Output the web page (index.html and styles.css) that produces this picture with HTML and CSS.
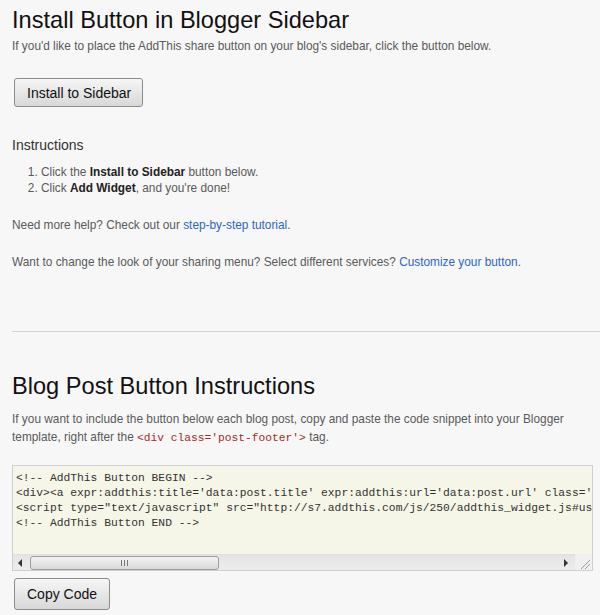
FILE: index.html
```html
<!DOCTYPE html>
<html>
<head>
<meta charset="utf-8">
<link rel="stylesheet" href="styles.css">
</head>
<body>
<div class="page">
  <h1 class="title">Install Button in Blogger Sidebar</h1>
  <p class="lead">If you'd like to place the AddThis share button on your blog's sidebar, click the button below.</p>
  <button class="btn btn-install">Install to Sidebar</button>

  <h3 class="subhead">Instructions</h3>
  <ol class="steps">
    <li>Click the <b>Install to Sidebar</b> button below.</li>
    <li>Click <b>Add Widget</b>, and you're done!</li>
  </ol>
  <p class="help">Need more help? Check out our <a href="#">step-by-step tutorial</a>.</p>
  <p class="help2">Want to change the look of your sharing menu? Select different services? <a href="#">Customize your button</a>.</p>

  <hr class="divider">

  <h2 class="title title2">Blog Post Button Instructions</h2>
  <p class="lead2">If you want to include the button below each blog post, copy and paste the code snippet into your Blogger template, right after the <code class="tag">&lt;div class='post-footer'&gt;</code> tag.</p>

  <div class="codebox">
    <pre class="code">&lt;!-- AddThis Button BEGIN --&gt;
&lt;div&gt;&lt;a expr:addthis:title='data:post.title' expr:addthis:url='data:post.url' class='addthis_button'&gt;&lt;img src="http://s7.addthis.com/static/btn/v2/lg-share-en.gif" width="125" height="16" alt="Bookmark and Share" style="border:0"/&gt;&lt;/a&gt;&lt;/div&gt;
&lt;script type="text/javascript" src="http://s7.addthis.com/js/250/addthis_widget.js#username=xa-4d2b47597ad291fb"&gt;&lt;/script&gt;
&lt;!-- AddThis Button END --&gt;</pre>
    <div class="hscroll">
      <div class="track">
        <span class="arrow arrow-left"></span>
        <div class="thumb"><span class="grip"></span></div>
        <span class="arrow arrow-right"></span>
      </div>
      <div class="corner">
        <svg width="17" height="16" viewBox="0 0 17 16"><path d="M15 6 L6 15 M15 10 L10 15" stroke="#9a9a9a" stroke-width="1" fill="none"/></svg>
      </div>
    </div>
  </div>
  <button class="btn btn-copy">Copy Code</button>
</div>
</body>
</html>
```
FILE: styles.css
```css
html, body {
  margin: 0;
  padding: 0;
  background: #f7f7f7;
}
.page {
  padding: 0 0 0 12px;
  font-family: Arial, "Liberation Sans", sans-serif;
  font-size: 12px;
  color: #5a5a5a;
  overflow: hidden;
  height: 615px;
}
.title {
  margin: 0;
  padding-top: 6px;
  font-size: 23.6px;
  line-height: 28px;
  font-weight: normal;
  color: #111;
}
.lead {
  margin: 3px 0 0;
  line-height: 18px;
  font-size: 11.85px;
}
.btn {
  display: block;
  box-sizing: border-box;
  height: 29px;
  padding: 0 12px;
  white-space: nowrap;
  font-family: Arial, "Liberation Sans", sans-serif;
  font-size: 14px;
  color: #111;
  background: linear-gradient(#f6f6f6, #d8d8d8);
  border: 1px solid #8c8c8c;
  border-radius: 3px;
  margin-left: 2px;
}
.btn-install {
  margin-top: 23px;
  width: 129px;
}
.subhead {
  margin: 29px 0 0;
  font-size: 14px;
  line-height: 18px;
  font-weight: normal;
  color: #333;
}
.steps {
  margin: 10px 0 0;
  padding-left: 29px;
  font-size: 11.85px;
}
.steps li {
  line-height: 16px;
}
.steps b {
  color: #222;
}
.help {
  margin: 20px 0 0;
  line-height: 18px;
  font-size: 11.85px;
}
.help2 {
  margin: 19px 0 0;
  line-height: 18px;
  font-size: 11.85px;
}
a {
  color: #2d66c3;
  text-decoration: none;
}
.divider {
  margin: 60px 0 0;
  border: 0;
  border-top: 1px solid #d4d4d4;
  height: 0;
}
.title2 {
  margin-top: 40px;
  padding-top: 0;
}
.lead2 {
  margin: 10px 0 0;
  line-height: 18px;
  width: 570px;
  font-size: 11.85px;
}
.tag {
  font-family: "Courier New", "Liberation Mono", monospace;
  font-size: 11.25px;
  color: #a52a2a;
}
.codebox {
  margin-top: 18px;
  width: 581px;
  box-sizing: border-box;
  height: 106px;
  border: 1px solid #cfcfcf;
  background: #f6f6e8;
  display: flex;
  flex-direction: column;
}
.code {
  flex: 1;
  margin: 0;
  padding: 5px 3px 0;
  overflow: hidden;
  white-space: pre;
  font-family: "Courier New", "Liberation Mono", monospace;
  font-size: 11.3px;
  line-height: 15px;
  color: #333;
}
.hscroll {
  display: flex;
  height: 16px;
  background: #f0f0f0;
}
.track {
  flex: 1;
  display: flex;
  align-items: center;
  background: linear-gradient(#e4e4e4, #ededed);
  border-top: 1px solid #e0e0e0;
  box-sizing: border-box;
}
.arrow {
  width: 0;
  height: 0;
  border-top: 4px solid transparent;
  border-bottom: 4px solid transparent;
}
.arrow-left {
  margin-left: 5px;
  border-right: 4px solid #333;
}
.arrow-right {
  margin-left: auto;
  margin-right: 7px;
  border-left: 4px solid #333;
}
.thumb {
  margin-left: 8px;
  width: 189px;
  height: 14px;
  box-sizing: border-box;
  border: 1px solid #9d9d9d;
  border-radius: 3px;
  background: linear-gradient(#f4f4f4, #d9d9d9);
  display: flex;
  align-items: center;
  justify-content: center;
}
.grip {
  width: 7px;
  height: 6px;
  background: repeating-linear-gradient(90deg, #777 0 1px, transparent 1px 3px);
}
.corner {
  width: 17px;
  background: #f0f0f0;
}
.corner svg {
  display: block;
}
.btn-copy {
  margin-top: 7px;
  width: 96px;
  height: 32px;
}
```
